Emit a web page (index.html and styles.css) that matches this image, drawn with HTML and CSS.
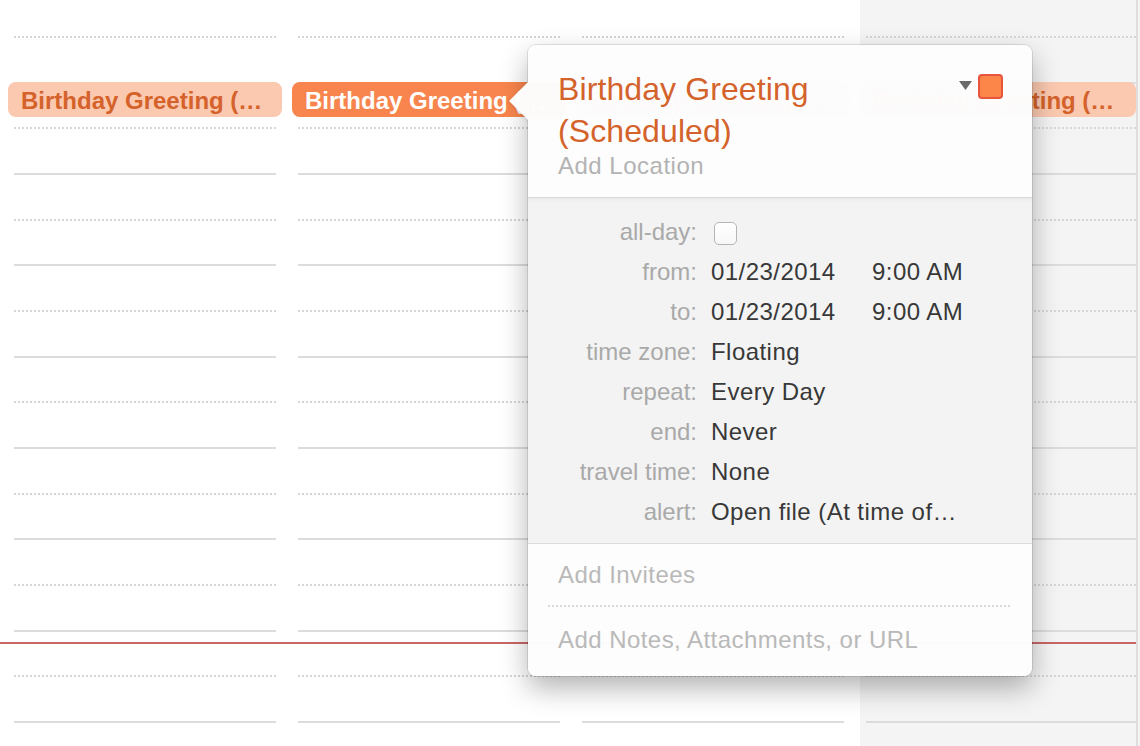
FILE: index.html
```html
<!DOCTYPE html>
<html>
<head>
<meta charset="utf-8">
<link rel="stylesheet" href="styles.css">
</head>
<body>
<div class="cal">
  <div class="col">
    <div class="day">
      <div class="lines">
        <div class="row dot"></div><div class="row solid"></div><div class="row dot"></div><div class="row solid"></div>
        <div class="row dot"></div><div class="row solid"></div><div class="row dot"></div><div class="row solid"></div>
        <div class="row dot"></div><div class="row solid"></div><div class="row dot"></div><div class="row solid"></div>
        <div class="row dot"></div><div class="row solid"></div><div class="row dot"></div><div class="row solid"></div>
      </div>
      <div class="chip">Birthday Greeting (…</div>
    </div>
  </div>
  <div class="col">
    <div class="day">
      <div class="lines">
        <div class="row dot"></div><div class="row solid"></div><div class="row dot"></div><div class="row solid"></div>
        <div class="row dot"></div><div class="row solid"></div><div class="row dot"></div><div class="row solid"></div>
        <div class="row dot"></div><div class="row solid"></div><div class="row dot"></div><div class="row solid"></div>
        <div class="row dot"></div><div class="row solid"></div><div class="row dot"></div><div class="row solid"></div>
      </div>
      <div class="chip selected">Birthday Greeting (…</div>
    </div>
  </div>
  <div class="col">
    <div class="day">
      <div class="lines">
        <div class="row dot"></div><div class="row solid"></div><div class="row dot"></div><div class="row solid"></div>
        <div class="row dot"></div><div class="row solid"></div><div class="row dot"></div><div class="row solid"></div>
        <div class="row dot"></div><div class="row solid"></div><div class="row dot"></div><div class="row solid"></div>
        <div class="row dot"></div><div class="row solid"></div><div class="row dot"></div><div class="row solid"></div>
      </div>
      <div class="chip">Birthday Greeting (…</div>
    </div>
  </div>
  <div class="col last">
    <div class="day">
      <div class="lines">
        <div class="row dot"></div><div class="row solid"></div><div class="row dot"></div><div class="row solid"></div>
        <div class="row dot"></div><div class="row solid"></div><div class="row dot"></div><div class="row solid"></div>
        <div class="row dot"></div><div class="row solid"></div><div class="row dot"></div><div class="row solid"></div>
        <div class="row dot"></div><div class="row solid"></div><div class="row dot"></div><div class="row solid"></div>
      </div>
      <div class="chip">Birthday Greeting (…</div>
    </div>
  </div>

  <div class="now-line"></div>

  <div class="popover">
    <svg class="arrow" width="21" height="40" viewBox="0 0 21 40"><polygon points="21,0 1,20 21,40" fill="rgba(253,253,253,0.985)"/></svg>
    <div class="pop-body">
      <div class="pop-head">
        <div class="head-text">
          <div class="title">Birthday Greeting (Scheduled)</div>
          <div class="location">Add Location</div>
        </div>
        <div class="head-controls">
          <svg class="caret" width="13" height="9" viewBox="0 0 13 9"><polygon points="0,0 13,0 6.5,9" fill="#6a6a6a"/></svg>
          <div class="swatch"></div>
        </div>
      </div>
      <div class="pop-details">
        <div class="label">all-day:</div><div class="value"><span class="checkbox"></span></div>
        <div class="label">from:</div><div class="value"><span class="date">01/23/2014</span><span>9:00 AM</span></div>
        <div class="label">to:</div><div class="value"><span class="date">01/23/2014</span><span>9:00 AM</span></div>
        <div class="label">time zone:</div><div class="value">Floating</div>
        <div class="label">repeat:</div><div class="value">Every Day</div>
        <div class="label">end:</div><div class="value">Never</div>
        <div class="label">travel time:</div><div class="value">None</div>
        <div class="label">alert:</div><div class="value">Open file (At time of…</div>
      </div>
      <div class="pop-foot">
        <div class="foot-item">Add Invitees</div>
        <div class="foot-sep"></div>
        <div class="foot-item second">Add Notes, Attachments, or URL</div>
      </div>
    </div>
  </div>
</div>
</body>
</html>
```

FILE: styles.css
```css
html, body {
  margin: 0;
  padding: 0;
  background: #ffffff;
  font-family: "Liberation Sans", Arial, Helvetica, sans-serif;
}

.cal {
  position: relative;
  display: flex;
  width: 1140px;
  height: 746px;
  overflow: hidden;
}

.col {
  width: 284px;
  flex: none;
  padding-left: 8px;
  box-sizing: border-box;
}

.col.last {
  width: 288px;
}

.day {
  position: relative;
  height: 100%;
}

.col.last .day {
  background:
    linear-gradient(to right, transparent 276px, #dedede 276px, #dedede 278px, transparent 278px),
    #f4f4f4;
}

.lines {
  margin-left: 6px;
  width: 262px;
  padding-top: 36px;
}

.col.last .lines {
  width: 270px;
}

.row {
  height: 45.67px;
}

.row.dot {
  background: linear-gradient(to right, #d6d6d6 50%, transparent 50%) 0 0 / 4px 2px repeat-x;
}

.row.solid {
  background: linear-gradient(#dcdcdc, #dcdcdc) 0 0 / 100% 2px no-repeat;
}

.chip {
  position: absolute;
  top: 82px;
  left: 0;
  width: 274px;
  height: 35px;
  box-sizing: border-box;
  padding-left: 13px;
  border-radius: 8px;
  background: #fbc9b0;
  color: #d4622a;
  font-weight: bold;
  font-size: 24px;
  line-height: 37px;
  white-space: nowrap;
  overflow: hidden;
}

.col.last .chip {
  width: 276px;
}

.chip.selected {
  background: #f8854d;
  color: #ffffff;
}

.now-line {
  position: absolute;
  left: 0;
  top: 641.7px;
  width: 1136px;
  height: 2px;
  background: #c96666;
}

.popover {
  position: absolute;
  left: 528px;
  top: 45px;
  width: 504px;
  z-index: 5;
}

.arrow {
  position: absolute;
  left: -20px;
  top: 36px;
  z-index: 2;
  filter: drop-shadow(-1px 1px 1px rgba(0, 0, 0, 0.08));
}

.pop-body {
  border-radius: 8px;
  overflow: hidden;
  box-shadow: 0 12px 28px rgba(0, 0, 0, 0.3), 0 0 0 1px rgba(0, 0, 0, 0.1);
}

.pop-head {
  display: flex;
  align-items: flex-start;
  padding: 23px 29px 17px 30px;
  background: rgba(253, 253, 253, 0.985);
  border-bottom: 1px solid #dadada;
}

.head-text {
  flex: 1;
  padding-right: 40px;
}

.title {
  color: #d4632b;
  font-size: 32px;
  line-height: 42px;
  letter-spacing: 0.1px;
}

.location {
  color: #b3b3b3;
  font-size: 24px;
  line-height: 28px;
  letter-spacing: 0.5px;
}

.head-controls {
  display: flex;
  align-items: center;
  gap: 6px;
  margin-top: 6px;
}

.caret {
  display: block;
  margin-top: -2px;
}

.swatch {
  width: 25px;
  height: 25px;
  box-sizing: border-box;
  border: 2px solid #e9543d;
  border-radius: 4px;
  background: #fc8549;
}

.pop-details {
  display: grid;
  grid-template-columns: 169px 1fr;
  column-gap: 14px;
  padding: 14px 0 11px 0;
  background: rgba(243, 243, 243, 0.99);
  box-shadow: inset 0 5px 5px -4px rgba(0, 0, 0, 0.06);
  border-bottom: 1px solid #dcdcdc;
  font-size: 24px;
  line-height: 40px;
}

.label {
  text-align: right;
  color: #a9a9a9;
}

.value {
  color: #383838;
  display: flex;
  align-items: center;
  white-space: nowrap;
  letter-spacing: 0.45px;
}

.date {
  display: inline-block;
  width: 161px;
}

.checkbox {
  display: block;
  width: 23px;
  height: 23px;
  box-sizing: border-box;
  margin-left: 3px;
  margin-top: 3px;
  border: 1px solid #b5b5b5;
  border-radius: 5px;
  background: linear-gradient(#ffffff, #f7f7f7);
}

.pop-foot {
  padding: 17px 22px 22px 20px;
  background: rgba(253, 253, 253, 0.985);
}

.foot-item {
  padding-left: 10px;
  color: #b9b9b9;
  font-size: 24px;
  line-height: 28px;
  letter-spacing: 0.45px;
}

.foot-sep {
  height: 2px;
  margin-top: 16px;
  margin-bottom: 19px;
  background: linear-gradient(to right, #d8d8d8 50%, transparent 50%) 0 0 / 4px 2px repeat-x;
}
```
